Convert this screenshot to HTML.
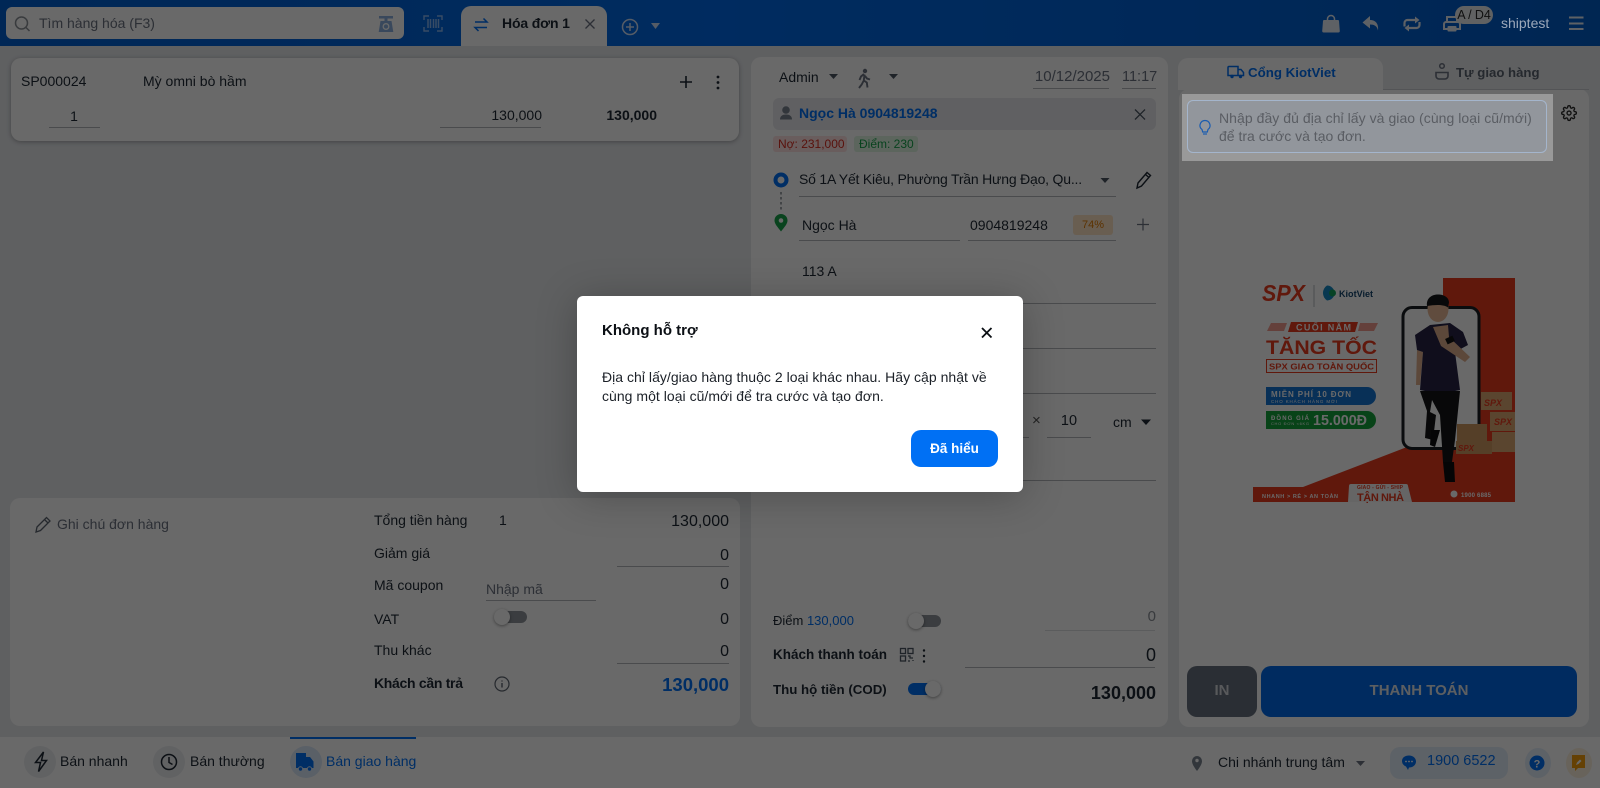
<!DOCTYPE html>
<html lang="vi"><head><meta charset="utf-8"><title>Hóa đơn 1</title>
<style>
*{box-sizing:border-box}
html,body{margin:0;padding:0;width:1600px;height:788px;overflow:hidden;background:#e6e8ec;font-family:"Liberation Sans","Noto Sans CJK SC",sans-serif;font-size:14px;color:#1f2933}
.a{position:absolute}
.t{position:absolute;line-height:20px;height:20px;white-space:nowrap}
.r{text-align:right}
.b{font-weight:bold}
.l{position:absolute;height:1px;background:#b4b7bb}
.p{position:absolute;background:#fff;border-radius:10px}
#top{left:0;top:0;width:1600px;height:46px;background:linear-gradient(90deg,#005fd0,#006ae8 45%,#005cc8)}
#ov{left:0;top:0;width:1600px;height:788px;background:rgba(0,0,0,.59)}
svg{position:absolute;left:0;top:0}
</style></head><body>
<div class="a" id="top"></div>
<div class="a" style="left:6px;top:7px;width:398px;height:32px;background:#fff;border-radius:6px"></div>
<div class="t" style="left:39px;top:13px;color:#6b7280">Tìm hàng hóa (F3)</div>
<div class="a" style="left:461px;top:6px;width:146px;height:40px;background:#fff;border-radius:10px 10px 0 0"></div>
<div class="t b" style="left:502px;top:13px;letter-spacing:-.15px">Hóa đơn 1</div>

<div class="p" style="left:11px;top:58px;width:728px;height:83px;box-shadow:0 1px 5px rgba(0,0,0,.3)"></div>
<div class="t" style="left:21px;top:71px">SP000024</div>
<div class="t" style="left:143px;top:71px">Mỳ omni bò hầm</div>
<div class="t" style="left:49px;top:106px;width:50px;text-align:center">1</div><div class="l" style="left:49px;top:127px;width:51px"></div>
<div class="t r" style="left:441px;top:105px;width:101px">130,000</div><div class="l" style="left:440px;top:127px;width:101px"></div>
<div class="t r b" style="left:557px;top:105px;width:100px">130,000</div>

<div class="p" style="left:10px;top:498px;width:730px;height:228px"></div>
<div class="t" style="left:57px;top:514px;color:#6b7280">Ghi chú đơn hàng</div>
<div class="t" style="left:374px;top:510px">Tổng tiền hàng</div><div class="t" style="left:499px;top:510px">1</div>
<div class="t r" style="left:629px;top:512px;width:100px;font-size:16px">130,000</div>
<div class="t" style="left:374px;top:543px">Giảm giá</div><div class="t r" style="left:629px;top:546px;width:100px;font-size:16px">0</div><div class="l" style="left:617px;top:566px;width:112px"></div>
<div class="t" style="left:374px;top:575px">Mã coupon</div><div class="t" style="left:486px;top:579px;color:#6b7280">Nhập mã</div><div class="l" style="left:486px;top:600px;width:110px"></div><div class="t r" style="left:629px;top:575px;width:100px;font-size:16px">0</div>
<div class="t" style="left:374px;top:609px">VAT</div><div class="t r" style="left:629px;top:610px;width:100px;font-size:16px">0</div>
<div class="t" style="left:374px;top:640px">Thu khác</div><div class="t r" style="left:629px;top:642px;width:100px;font-size:16px">0</div><div class="l" style="left:617px;top:663px;width:112px"></div>
<div class="t b" style="left:374px;top:673px;letter-spacing:-.3px">Khách cần trả</div>
<div class="t r b" style="left:609px;top:675px;width:120px;font-size:18.500px;color:#0070f4">130,000</div>
<div class="a" style="left:496px;top:611px;width:31px;height:12px;border-radius:6px;background:#8f949b"></div>
<div class="a" style="left:494px;top:609px;width:16px;height:16px;border-radius:50%;background:#fff;box-shadow:0 1px 3px rgba(0,0,0,.4)"></div>

<div class="p" style="left:751px;top:57px;width:417px;height:670px"></div>
<div class="t" style="left:779px;top:67px">Admin</div>
<div class="t r" style="left:1020px;top:67px;width:90px;color:#6b7280;font-size:15px">10/12/2025</div><div class="l" style="left:1033px;top:88px;width:76px"></div>
<div class="t" style="left:1122px;top:67px;color:#6b7280;font-size:14.500px">11:17</div><div class="l" style="left:1122px;top:88px;width:34px"></div>
<div class="a" style="left:773px;top:98px;width:383px;height:32px;background:#e8eaed;border-radius:6px"></div>
<div class="t b" style="left:799px;top:103px;color:#0070f4">Ngọc Hà 0904819248</div>
<div class="a" style="left:773px;top:136px;width:74px;height:16px;background:#ffe3e3;border-radius:3px"></div>
<div class="t" style="left:778px;top:134px;font-size:12px;color:#d92d20">Nợ: 231,000</div>
<div class="a" style="left:854px;top:136px;width:64px;height:16px;background:#dff5e3;border-radius:3px"></div>
<div class="t" style="left:859px;top:134px;font-size:12px;color:#16a34a">Điểm: 230</div>
<div class="t" style="left:799px;top:169px;width:290px;overflow:hidden;letter-spacing:-.2px">Số 1A Yết Kiêu, Phường Trần Hưng Đạo, Qu...</div><div class="l" style="left:799px;top:196px;width:317px"></div>
<div class="t" style="left:802px;top:215px">Ngọc Hà</div><div class="l" style="left:799px;top:240px;width:161px"></div>
<div class="t" style="left:970px;top:215px">0904819248</div><div class="l" style="left:968px;top:240px;width:148px"></div>
<div class="a" style="left:1073px;top:215px;width:40px;height:20px;background:#ffe4c4;border-radius:3px"></div>
<div class="t" style="left:1073px;top:215px;width:40px;text-align:center;font-size:11px;color:#e07a00">74%</div>
<div class="t" style="left:802px;top:261px">113 A</div>
<div class="l" style="left:799px;top:303px;width:357px"></div>
<div class="l" style="left:799px;top:348px;width:357px"></div>
<div class="l" style="left:799px;top:393px;width:357px"></div>
<div class="l" style="left:799px;top:437px;width:230px"></div>
<div class="t" style="left:1032px;top:411px;color:#555;font-size:15px">×</div>
<div class="t" style="left:1047px;top:411px;width:44px;text-align:center;font-size:14.500px">10</div><div class="l" style="left:1047px;top:437px;width:44px"></div>
<div class="t" style="left:1113px;top:412px">cm</div>
<div class="l" style="left:799px;top:480px;width:357px"></div>
<div class="t" style="left:773px;top:611px;font-size:13px">Điểm <span style="color:#0070f4">130,000</span></div>
<div class="t r" style="left:1056px;top:607px;width:100px;color:#8a8f96;font-size:15px">0</div><div class="l" style="left:1045px;top:630px;width:110px;background:#dde0e3"></div>
<div class="t b" style="left:773px;top:645px;font-size:13.500px">Khách thanh toán</div>
<div class="t r" style="left:1056px;top:645px;width:100px;font-size:18px">0</div><div class="l" style="left:965px;top:667px;width:190px"></div>
<div class="t b" style="left:773px;top:680px;font-size:13.300px">Thu hộ tiền (COD)</div>
<div class="t r b" style="left:1036px;top:683px;width:120px;font-size:18px">130,000</div>
<div class="a" style="left:908px;top:615px;width:33px;height:12px;border-radius:6px;background:#8f949b"></div>
<div class="a" style="left:908px;top:613px;width:16px;height:16px;border-radius:50%;background:#fff;box-shadow:0 1px 3px rgba(0,0,0,.4)"></div>
<div class="a" style="left:908px;top:683px;width:33px;height:12px;border-radius:6px;background:#0070f4"></div>
<div class="a" style="left:925px;top:681px;width:16px;height:16px;border-radius:50%;background:#fff;box-shadow:0 1px 3px rgba(0,0,0,.4)"></div>

<div class="p" style="left:1179px;top:89px;width:410px;height:638px"></div>
<div class="a" style="left:1178px;top:58px;width:205px;height:32px;background:#fff;border-radius:10px 10px 0 0"></div>
<div class="l" style="left:1383px;top:89px;width:206px;background:#c9ccd0"></div>
<div class="t b" style="left:1248px;top:63px;color:#0070f4;font-size:13.300px">Cổng KiotViet</div>
<div class="t b" style="left:1456px;top:63px;font-size:13.200px;color:#5b6470">Tự giao hàng</div>
<div class="a" style="left:1187px;top:666px;width:70px;height:51px;background:#66707e;border-radius:10px"></div>
<div class="t b" style="left:1187px;top:681px;width:70px;text-align:center;color:#d5d8dc;font-size:15px">IN</div>
<div class="a" style="left:1261px;top:666px;width:316px;height:51px;background:#006ae8;border-radius:10px"></div>
<div class="t b" style="left:1261px;top:681px;width:316px;text-align:center;color:#e2e6ec;font-size:15px">THANH TOÁN</div>

<div class="a" style="left:0;top:737px;width:1600px;height:51px;background:#fff"></div>
<div class="a" style="left:290px;top:737px;width:126px;height:2px;background:#0070f4"></div>
<div class="a" style="left:24px;top:746px;width:32px;height:32px;border-radius:50%;background:#eceef1"></div>
<div class="a" style="left:153px;top:746px;width:32px;height:32px;border-radius:50%;background:#eceef1"></div>
<div class="a" style="left:290px;top:746px;width:32px;height:32px;border-radius:50%;background:#dbe9fb"></div>
<div class="t" style="left:60px;top:751px">Bán nhanh</div>
<div class="t" style="left:190px;top:751px">Bán thường</div>
<div class="t" style="left:326px;top:751px;color:#0070f4">Bán giao hàng</div>
<div class="t" style="left:1218px;top:752px">Chi nhánh trung tâm</div>
<div class="a" style="left:1390px;top:747px;width:118px;height:32px;background:#e3edfb;border-radius:10px"></div>
<div class="t" style="left:1427px;top:751px;color:#0070f4;font-size:14.500px">1900 6522</div>
<div class="a" style="left:1525px;top:748px;width:26px;height:30px;border-radius:50%;background:#e3edfb"></div>
<div class="a" style="left:1566px;top:748px;width:26px;height:30px;border-radius:50%;background:#fdf0dc"></div>

<svg width="1600" height="788" viewBox="0 0 1600 788" fill="none">
<!-- topbar -->
<circle cx="21.500" cy="23" r="6" stroke="#8a8f96" stroke-width="1.500"/><path d="M26 27.500l3.500 3.500" stroke="#8a8f96" stroke-width="1.500"/>
<path d="M379 16h14v2.500h-14zM384.500 18.500h3v3h-3zM380.500 21h11l1.800 11h-14.600z" fill="#8ab0e0"/><circle cx="386" cy="26.500" r="2.800" stroke="#fff" stroke-width="1.300"/>
<path d="M424 20v-4h5M437 16h5v4M442 27v4h-5M429 31h-5v-4" stroke="#8ab8f5" stroke-width="1.400"/><path d="M428 19v9M430.500 19v9M433.500 19v9M436 19v9M438.500 19v9" stroke="#8ab8f5" stroke-width="1.500"/>
<path d="M475 22h12l-3.500-3.500M487 27.500h-12l3.500 3.500" stroke="#0070f4" stroke-width="1.500"/>
<path d="M585.500 19.500l9 9M594.500 19.500l-9 9" stroke="#6b7280" stroke-width="1.300"/>
<circle cx="630" cy="27" r="7.500" stroke="#cfe0f8" stroke-width="1.500"/><path d="M630 23v8M626 27h8" stroke="#cfe0f8" stroke-width="1.500"/>
<path d="M651 23h9l-4.500 6z" fill="#cfe0f8"/>
<path d="M1324 20h14a1 1 0 0 1 1 1l.800 10a1.500 1.500 0 0 1-1.500 1.500h-14.600a1.500 1.500 0 0 1-1.500-1.500l.800-10a1 1 0 0 1 1-1z" fill="#e4ebf5"/><path d="M1327.500 21v-2a3.500 3.500 0 0 1 7 0v2" stroke="#e4ebf5" stroke-width="1.500"/>
<path d="M1370 16l-7.500 6.500 7.500 6v-4c4.500 0 7 1.500 8 6 .8-7-2.500-10.500-8-10.500z" fill="#e4ebf5"/>
<path d="M1404.500 26.500v-3.500a3 3 0 0 1 3-3h9" stroke="#e4ebf5" stroke-width="2.200"/><path d="M1415 16.500l4.500 3.500-4.500 3.500z" fill="#e4ebf5"/>
<path d="M1419.500 22v3a3 3 0 0 1-3 3h-9" stroke="#e4ebf5" stroke-width="2.200"/><path d="M1409 24.500l-4.500 3.500 4.500 3.500z" fill="#e4ebf5"/>
<path d="M1446 22h12a2 2 0 0 1 2 2v5h-16v-5a2 2 0 0 1 2-2z" stroke="#e4ebf5" stroke-width="2"/><rect x="1447.500" y="26" width="9" height="5.500" rx="1" fill="#e4ebf5"/><rect x="1447" y="17" width="10" height="5" stroke="#e4ebf5" stroke-width="2"/>
<rect x="1455" y="6" width="38" height="18" rx="9" fill="#e8ebef"/>
<path d="M1569 17.500h14.500M1569 23.500h14.500M1569 29h14.500" stroke="#e4ebf5" stroke-width="2"/>
<!-- card -->
<path d="M680 82h12M686 76v12" stroke="#1f2933" stroke-width="1.600"/>
<circle cx="718" cy="77" r="1.400" fill="#1f2933"/><circle cx="718" cy="82.500" r="1.400" fill="#1f2933"/><circle cx="718" cy="88" r="1.400" fill="#1f2933"/>
<!-- bottom left -->
<path d="M36 532l1-5 9.500-9.500 3.500 3.500-9.500 9.500zM44.500 519.500l3.500 3.500" stroke="#5c6570" stroke-width="1.300"/>
<circle cx="502" cy="684" r="7" stroke="#5c6570" stroke-width="1.200"/><path d="M502 683v4.500M502 680.500v1" stroke="#5c6570" stroke-width="1.400"/>
<!-- center -->
<path d="M829 74h9l-4.500 5z" fill="#4b5563"/>
<circle cx="865" cy="71" r="2.200" fill="#6b7280"/><path d="M864 74l-3 2.500-1.500 3.500M864.500 74.500l-.7 6 3 2 .7 5M863.500 81l-1.800 3.500-2.700 3.500M865 76l2 2.500 3 1" stroke="#6b7280" stroke-width="1.900"/>
<path d="M889 74h9l-4.500 5z" fill="#4b5563"/>
<circle cx="786" cy="110" r="3.800" fill="#7b8490"/><path d="M780 119.500c0-3.500 2.500-5 6-5s6 1.500 6 5z" fill="#7b8490"/>
<path d="M1135 109.500l10 10M1145 109.500l-10 10" stroke="#4b5563" stroke-width="1.300"/>
<circle cx="781" cy="180" r="5.500" stroke="#0070f4" stroke-width="4" fill="#fff"/>
<path d="M781 192v20" stroke="#a0a5ab" stroke-width="2" stroke-dasharray="2.500 2.500"/>
<path d="M781 231.500c-3-4-6.500-7.500-6.500-11a6.500 6.500 0 0 1 13 0c0 3.500-3.500 7-6.500 11z" fill="#16a34a"/><circle cx="781" cy="220.500" r="2.300" fill="#fff"/>
<path d="M1100.500 178h9l-4.500 5z" fill="#4b5563"/>
<path d="M1137 188l1-5 9-10.500 3.500 3-9 10.500zM1145.500 174.500l3.500 3" stroke="#1f2933" stroke-width="1.400"/>
<path d="M1137 224.500h12M1143 218.500v12" stroke="#6b7280" stroke-width="1.200"/>
<path d="M1141 419.500h10l-5 5.500z" fill="#1f2933"/>
<g stroke="#4b5563" stroke-width="1.300"><rect x="900.500" y="648.500" width="5" height="5"/><rect x="908" y="648.500" width="5" height="5"/><rect x="900.500" y="656" width="5" height="5"/><path d="M908 656h2v2h3M908 661h2M913 660v1"/></g>
<circle cx="924" cy="650.500" r="1.200" fill="#1f2933"/><circle cx="924" cy="656" r="1.200" fill="#1f2933"/><circle cx="924" cy="661.500" r="1.200" fill="#1f2933"/>
<!-- right tabs -->
<path d="M1228 67.500a1 1 0 0 1 1-1h9v9h-10zM1238 69.500h3l2.500 3v3h-5.500z" stroke="#0070f4" stroke-width="1.500"/><circle cx="1232" cy="76.500" r="1.700" fill="#0070f4"/><circle cx="1240.500" cy="76.500" r="1.700" fill="#0070f4"/>
<circle cx="1442" cy="66" r="2.300" stroke="#6b7280" stroke-width="1.500"/><path d="M1436 72.500h12v3.500a3 3 0 0 1-3 3h-6a3 3 0 0 1-3-3z" stroke="#6b7280" stroke-width="1.600"/>
<!-- bottom icons -->
<path d="M43.500 752l-8 10.500h5l-2 9 8-11h-5z" stroke="#1f2933" stroke-width="1.500"/>
<circle cx="169" cy="762" r="7.500" stroke="#1f2933" stroke-width="1.500"/><path d="M169 757v5.500l3.500 2" stroke="#1f2933" stroke-width="1.500"/>
<path d="M296 753h10v15h-10zM306 757h4l3.500 4.500v6.500h-7.500z" fill="#0070f4"/><circle cx="300.500" cy="769" r="2.200" fill="#0070f4" stroke="#dbe9fb"/><circle cx="309.500" cy="769" r="2.200" fill="#0070f4" stroke="#dbe9fb"/>
<path d="M1197 771c-3-4-5-7-5-10a5 5 0 0 1 10 0c0 3-2 6-5 10z" fill="#7b8490"/><circle cx="1197" cy="760.500" r="1.700" fill="#fff"/>
<path d="M1356 761h9l-4.500 5z" fill="#6b7280"/>
<path d="M1409 755.500c4 0 7 2.700 7 6s-3 6-7 6l-1 2.500-2-3.500c-2.500-1-4-3-4-5.500 0-3.300 3-5.500 7-5.500z" fill="#0070f4"/><circle cx="1406" cy="761.500" r=".9" fill="#fff"/><circle cx="1409" cy="761.500" r=".9" fill="#fff"/><circle cx="1412" cy="761.500" r=".9" fill="#fff"/>
<circle cx="1537" cy="763" r="7.500" fill="#0070f4"/>
<text x="1537" y="767.500" text-anchor="middle" font-family="Liberation Sans" font-weight="bold" font-size="11" fill="#fff">?</text>
<path d="M1572 755h13v13h-7l-3 3v-3h-3z" fill="#f59e0b"/><path d="M1576 765l1-2.500 3-3 1.500 1.500-3 3z" fill="#fff"/>
<!-- banner -->
<rect x="1443" y="278" width="72" height="224" fill="#e83a1f"/>
<path d="M1303 487L1407 447H1443V487z" fill="#e83a1f"/>
<rect x="1253" y="487" width="262" height="15" fill="#e83a1f"/>
<path d="M1348 502l1-16q0-2 2-2h55q2 0 2 2l4 16z" fill="#f4f4f4"/>
<text x="1262" y="301" font-family="Liberation Sans" font-weight="bold" font-style="italic" font-size="23" fill="#e83a1f" textLength="43" lengthAdjust="spacingAndGlyphs">SPX</text>
<path d="M1314 285v22" stroke="#b9bcc0"/>
<path d="M1327 285.500a7.500 7.500 0 0 1 0 15 9 9 0 0 1 0-15z" fill="#1489c6"/><circle cx="1332.500" cy="293" r="3.500" fill="#12a35a"/>
<text x="1339" y="297" font-family="Liberation Sans" font-weight="bold" font-size="9" fill="#15466e" textLength="34" lengthAdjust="spacingAndGlyphs">KiotViet</text>
<path d="M1291 322h67l-3 10h-67z" fill="#e83a1f"/><text x="1296" y="330.500" font-family="Liberation Sans" font-weight="bold" font-size="9" fill="#fff" textLength="55">CUỐI NĂM</text>
<path d="M1271 323h16l-3 8h-17zM1360 323h18l-4 8h-16z" fill="#e83a1f" opacity=".5"/>
<text x="1266" y="354" font-family="Liberation Sans" font-weight="bold" font-size="19" fill="#e83a1f" textLength="111" lengthAdjust="spacingAndGlyphs">TĂNG TỐC</text>
<rect x="1266.500" y="359.500" width="110" height="13" fill="none" stroke="#e83a1f"/>
<text x="1269" y="369.500" font-family="Liberation Sans" font-weight="bold" font-size="8" fill="#e83a1f" textLength="105" lengthAdjust="spacingAndGlyphs">SPX GIAO TOÀN QUỐC</text>
<path d="M1266 387h101a9 9 0 0 1 0 18h-101z" fill="#1476d4"/>
<text x="1271" y="397" font-family="Liberation Sans" font-weight="bold" font-size="8" fill="#fff" textLength="80">MIỄN PHÍ 10 ĐƠN</text>
<text x="1271" y="403" font-family="Liberation Sans" font-size="4.500" fill="#fff" textLength="66">CHO KHÁCH HÀNG MỚI</text>
<path d="M1266 411h101a9 9 0 0 1 0 18h-101z" fill="#14a33c"/>
<text x="1271" y="420" font-family="Liberation Sans" font-weight="bold" font-size="6" fill="#fff" textLength="38">ĐỒNG GIÁ</text>
<text x="1271" y="425" font-family="Liberation Sans" font-size="4" fill="#fff" textLength="38">CHO ĐƠN &lt;6KG</text>
<text x="1313" y="425" font-family="Liberation Sans" font-weight="bold" font-size="15" fill="#fff" textLength="54" lengthAdjust="spacingAndGlyphs">15.000Đ</text>
<rect x="1403" y="307.500" width="76" height="141" rx="9" fill="#fff" stroke="#1a1d22" stroke-width="3"/>
<path d="M1481 392h31v18h-31zM1490 412h25v19h-25zM1492 432h23v20h-23z" fill="#dba872"/><path d="M1457 424h30v17h-30zM1456 441h36v13h-36z" fill="#cf9a63"/>
<text x="1484" y="406" font-family="Liberation Sans" font-weight="bold" font-style="italic" font-size="9" fill="#e83a1f">SPX</text>
<text x="1494" y="425" font-family="Liberation Sans" font-weight="bold" font-style="italic" font-size="9" fill="#e83a1f">SPX</text>
<text x="1458" y="451" font-family="Liberation Sans" font-weight="bold" font-style="italic" font-size="8" fill="#e83a1f">SPX</text>
<!-- person -->
<path d="M1417 350l6 2-3 33h-4z" fill="#dfae8d"/>
<path d="M1415 335l15-10 20-2 13 9 5 13-13 7 5 38-20 4-20-4 3-38-6-2z" fill="#272446"/>
<path d="M1420 391h40l-5 49-3 22h-9l-3-47-8-15-2 12 6 3-3 25-8-2 2-27z" fill="#141416"/>
<path d="M1431 430h9l-5 17-5-2zM1443 462h11l1 20h-10z" fill="#0e0e10"/>
<path d="M1433 327l15-2 1 12 21 20-5 5-24-16z" fill="#dfae8d"/>
<rect x="1446" y="337" width="8" height="6" transform="rotate(-25 1450 340)" fill="#111"/>
<ellipse cx="1438" cy="309" rx="10.500" ry="13" fill="#e8b997"/><path d="M1427 306c-1-8 5-11.500 11-11.500s11 3 11 8l-1 5c-4-3-12-3-21-1.500z" fill="#15161a"/>
<text x="1262" y="498" font-family="Liberation Sans" font-weight="bold" font-size="5.500" fill="#fff" textLength="76">NHANH &gt; RẺ &gt; AN TOÀN</text>
<text x="1357" y="489" font-family="Liberation Sans" font-weight="bold" font-size="5" fill="#e83a1f" textLength="46">GIAO - GỬI - SHIP</text>
<text x="1357" y="501" font-family="Liberation Sans" font-weight="bold" font-size="11" fill="#e83a1f" textLength="47">TẬN NHÀ</text>
<circle cx="1454" cy="494" r="3.500" fill="#fff"/><text x="1461" y="497" font-family="Liberation Sans" font-weight="bold" font-size="6" fill="#fff" textLength="30">1900 6885</text>
</svg>

<div class="a" id="ov"></div>
<div class="t" style="left:1455px;top:5px;width:38px;text-align:center;font-size:12.500px;color:#101010;z-index:2;letter-spacing:-.1px">A / D4</div>
<div class="t" style="left:1501px;top:13px;color:#9ca8ba;z-index:2">shiptest</div>

<!-- spotlight -->
<div class="a" style="left:1182px;top:94px;width:371px;height:67px;background:#999"></div>
<div class="a" style="left:1187px;top:100px;width:360px;height:53px;background:#92969c;border:1px solid #a4b5cc;border-radius:6px"></div>
<div class="t" style="left:1219px;top:107.500px;color:#5a5d63;font-size:14px;letter-spacing:.05px">Nhập đầy đủ địa chỉ lấy và giao (cùng loại cũ/mới)</div>
<div class="t" style="left:1219px;top:126px;color:#5a5d63;font-size:14px">để tra cước và tạo đơn.</div>
<svg width="1600" height="788" viewBox="0 0 1600 788" fill="none" style="pointer-events:none">
<path d="M1205 120.500a5 5 0 0 1 3 9l-.7 2.500h-4.600l-.7-2.500a5 5 0 0 1 3-9z" stroke="#1a5cb0" stroke-width="1.200"/><path d="M1203 134h4" stroke="#1a5cb0" stroke-width="1.200"/>
<g transform="translate(1561 105) scale(.67)" stroke="#111" stroke-width="2"><path d="M12 15a3 3 0 1 0 0-6 3 3 0 0 0 0 6z"/><path d="M19.400 15a1.650 1.650 0 0 0 .33 1.820l.06.06a2 2 0 0 1 0 2.830 2 2 0 0 1-2.830 0l-.06-.06a1.650 1.650 0 0 0-1.820-.33 1.650 1.650 0 0 0-1 1.510V21a2 2 0 0 1-2 2 2 2 0 0 1-2-2v-.09A1.650 1.650 0 0 0 9 19.400a1.650 1.650 0 0 0-1.820.33l-.06.06a2 2 0 0 1-2.830 0 2 2 0 0 1 0-2.830l.06-.06a1.650 1.650 0 0 0 .33-1.820 1.650 1.650 0 0 0-1.510-1H3a2 2 0 0 1-2-2 2 2 0 0 1 2-2h.09A1.650 1.650 0 0 0 4.600 9a1.650 1.650 0 0 0-.33-1.820l-.06-.06a2 2 0 0 1 0-2.830 2 2 0 0 1 2.830 0l.06.06a1.650 1.650 0 0 0 1.820.33H9a1.650 1.650 0 0 0 1-1.510V3a2 2 0 0 1 2-2 2 2 0 0 1 2 2v.09a1.650 1.650 0 0 0 1 1.510 1.650 1.650 0 0 0 1.820-.33l.06-.06a2 2 0 0 1 2.830 0 2 2 0 0 1 0 2.830l-.06.06a1.650 1.650 0 0 0-.33 1.820V9a1.650 1.650 0 0 0 1.510 1H21a2 2 0 0 1 2 2 2 2 0 0 1-2 2h-.09a1.650 1.650 0 0 0-1.510 1z"/></g>
</svg>

<!-- modal -->
<div class="a" style="left:577px;top:296px;width:446px;height:196px;background:#fff;border-radius:6px;box-shadow:0 4px 40px rgba(0,0,0,.25)"></div>
<div class="t b" style="left:602px;top:321px;font-size:15px;color:#0b0f14">Không hỗ trợ</div>
<div class="t" style="left:602px;top:367px;color:#1c2128;letter-spacing:.03px">Địa chỉ lấy/giao hàng thuộc 2 loại khác nhau. Hãy cập nhật về</div>
<div class="t" style="left:602px;top:386px;color:#1c2128;letter-spacing:.03px">cùng một loại cũ/mới để tra cước và tạo đơn.</div>
<div class="a" style="left:911px;top:430px;width:87px;height:37px;background:#0070f4;border-radius:10px"></div>
<div class="t b" style="left:911px;top:439px;width:87px;text-align:center;color:#fff;font-size:13.500px">Đã hiểu</div>
<svg width="1600" height="788" viewBox="0 0 1600 788" fill="none"><path d="M982 328l9.500 9.500M991.500 328l-9.500 9.500" stroke="#0b0f14" stroke-width="1.800"/></svg>
</body></html>
